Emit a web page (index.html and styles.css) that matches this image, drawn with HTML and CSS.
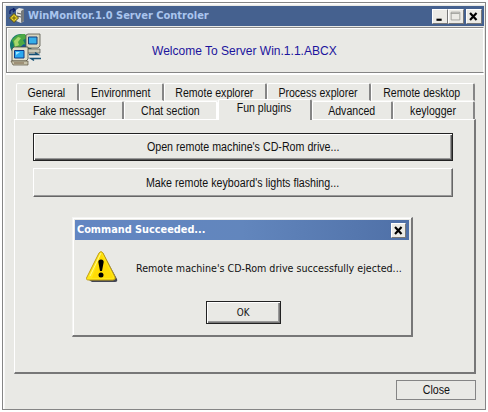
FILE: index.html
```html
<!DOCTYPE html>
<html lang="en">
<head>
<meta charset="utf-8">
<title>WinMonitor.1.0 Server Controler</title>
<link rel="stylesheet" href="styles.css">
</head>
<body>
<main class="window">
  <header class="titlebar">
    <svg class="app-icon" viewBox="0 0 16 16">
      <path d="M7 2l3-2 5 1v12l-3 2-5-2z" fill="#e2e3df"/>
      <path d="M12 3l3-2v12l-3 2z" fill="#777b7c"/>
      <path d="M8 5l4 1M8 8l4 1" stroke="#555" fill="none"/>
      <path d="M1 6V3q1-2 4-1M4 0l2 2-2 2" stroke="#0b1d66" stroke-width="1.3" fill="none"/>
      <path d="M5 5.500l4.500 4.500-4.500 4.500-4.500-4.500z" fill="#f4dc28" stroke="#4a4010"/>
      <path d="M5 7.500v5M2.500 10h5" stroke="#6b5c10"/>
    </svg>
    <h1 class="title"><span>WinMonitor.1.0 Server Controler</span></h1>
    <div class="controls">
      <button class="ctl"><svg viewBox="0 0 15 15"><path d="M4 10h6v2.500H4z"/></svg></button>
      <button class="ctl"><svg viewBox="0 0 15 15"><path d="M2.500 2.500h10v9h-10zM2 4h10" fill="none" stroke="#999a96"/></svg></button>
      <button class="ctl ctl-close"><svg viewBox="0 0 15 15"><path d="M3.500 3.500l7.500 8M11 3.500l-7.500 8" stroke="#000" stroke-width="2.500"/></svg></button>
    </div>
  </header>
  <section class="banner">
    <svg class="banner-icon" viewBox="0 0 33 33">
      <circle cx="12" cy="12" r="11" fill="#14776e"/>
      <path d="M3 7Q8 0 16 1l2 4-4 2 2 4-4 3-3 5-5-2 1-5z" fill="#4da943"/>
      <path d="M5 8l4-4 3 1-3 4 1 3-4 2z" fill="#a8d76c"/>
      <path d="M10 15l5-4 3 4-3 4z" fill="#14509b"/>
      <path d="M17 2l2-1h12v12l-2 2H17z" fill="#d7d4bd" stroke="#55574d" stroke-width=".8"/>
      <path d="M19.500 4h8.500v7h-8.500z" fill="#36aee8" stroke="#173d78"/>
      <path d="M16 16h15v4H18z" fill="#c9c8b6" stroke="#55574d" stroke-width=".7"/>
      <path d="M3 16l2-2h14v12l-2 2H3z" fill="#e1dec9" stroke="#4d4d43" stroke-width=".8"/>
      <path d="M5.500 17.500h9.500v7.500H5.500z" fill="#2aa8f0" stroke="#123b83"/>
      <path d="M7 19h4l-4 3z" fill="#a3e8ff"/>
      <path d="M2 28h17v4H4z" fill="#c7c2aa" stroke="#5a513e" stroke-width=".7"/>
      <path d="M5 30h10" stroke="#765f45"/>
      <path d="M20 21.500h9l-3-2M32 25.500h-10l3 2" stroke="#155276" stroke-width="1.500" fill="none"/>
    </svg>
    <p class="welcome"><span>Welcome To Server Win.1.1.ABCX</span></p>
  </section>
  <section class="tabs">
    <nav class="row row-back">
      <a class="tab t-general"><span>General</span></a>
      <a class="tab t-env"><span>Environment</span></a>
      <a class="tab t-remote"><span>Remote explorer</span></a>
      <a class="tab t-process"><span>Process explorer</span></a>
      <a class="tab t-desktop"><span>Remote desktop</span></a>
    </nav>
    <nav class="row row-front">
      <a class="tab t-fake"><span>Fake messager</span></a>
      <a class="tab t-chat"><span>Chat section</span></a>
      <a class="tab t-fun active"><span>Fun plugins</span></a>
      <a class="tab t-adv"><span>Advanced</span></a>
      <a class="tab t-key"><span>keylogger</span></a>
    </nav>
    <div class="page">
      <button class="wide focused"><span>Open remote machine's CD-Rom drive...</span></button>
      <button class="wide second"><span>Make remote keyboard's lights flashing...</span></button>
    </div>
  </section>
  <footer class="footer"><button class="close"><span>Close</span></button></footer>
</main>
<section class="dialog" role="dialog">
  <header class="dialog-title">
    <h2><span>Command Succeeded...</span></h2>
    <button class="ctl"><svg viewBox="0 0 15 15"><path d="M3.500 3.500l7.500 8M11 3.500l-7.500 8" stroke="#000" stroke-width="2.500"/></svg></button>
  </header>
  <div class="message">
    <svg class="warning" viewBox="0 0 32 32">
      <path d="M17 2l14 26q1 3-2 3H6L3 29z" fill="#434653"/>
      <path d="M13 2q2-3 4 0l12 24q1 3-2 3H3q-4 0-2-3z" fill="#ffe817" stroke="#c29d13"/>
      <path d="M15 2l12 24q0 1-2 1H6z" fill="#ffdc05"/>
      <path d="M15 2L4 25" stroke="#fff68a"/>
      <path d="M12.300 11q0-2.500 2.700-2.500t2.700 2.500L16 20h-2z"/><circle cx="15" cy="24" r="2.500"/>
    </svg>
    <p><span>Remote machine's CD-Rom drive successfully ejected...</span></p>
  </div>
  <button class="ok"><span>OK</span></button>
</section>
</body>
</html>
```

FILE: styles.css
```css
* { box-sizing: border-box; }
body { margin: 0; padding: 2px; width: 488px; height: 412px; background: #fff; overflow: hidden; font: 12px/14px "Liberation Sans", sans-serif; color: #111; }
h1, h2, p { margin: 0; font-size: inherit; font-weight: normal; white-space: nowrap; }
button { padding: 0; border: 0; border-radius: 0; background: #e9e9e5; font: inherit; color: inherit; }
span { display: inline-block; white-space: nowrap; transform: scaleX(.89); }
svg { display: block; flex: none; }
.window { width: 484px; height: 408px; padding: 3px 1px 0 3px; background: #e9e9e5; border: 1px solid #858585; box-shadow: inset 1px 1px #fff, inset 2px 2px #f8f8f6; display: flex; flex-direction: column; }
.titlebar { height: 20px; background: #45618f; display: flex; align-items: center; padding: 0 2px 0 3px; }
.app-icon { width: 16px; height: 16px; }
.title { flex: 1; margin-left: 3px; font: bold 11px/16px "DejaVu Sans Condensed", "DejaVu Sans", sans-serif; color: #a9c5ee; }
.title span { transform-origin: left; transform: none; }
.controls { display: flex; }
.ctl { width: 15px; height: 15px; border: 1px solid; border-color: #fff #777 #777 #fff; background: #ecebe6; flex: none; }
.controls .ctl { width: 16px; }
.ctl svg { width: 13px; height: 13px; }
.ctl-close { margin-left: 2px; }
.banner { height: 46px; margin-top: 1px; border: 1px solid #858585; border-right-color: #fff; box-shadow: 0 1px #fff, 0 2px #fff, inset 1px 1px #fff; display: grid; grid-template-columns: 143px 1fr; align-items: center; }
.banner-icon { width: 33px; height: 33px; margin: -2px 0 0 2px; }
.welcome { font-size: 13px; line-height: 16px; padding-top: 1px; margin-left: 2px; color: #1c149d; }
.welcome span { transform-origin: left; transform: scaleX(.925); }
.tabs { margin: 10px 8px 0; display: flex; flex-direction: column; }
.row { display: flex; height: 18px; padding: 0 2px; }
.tab { height: 18px; border-top: 1px solid #fff; border-left: 1px solid #fff; border-right: 2px solid #858585; border-radius: 2px 2px 0 0; text-align: center; padding: 2px 1px 0 0; flex: none; }
.tab span { transform: scaleX(.88); }
.row-back .tab { border-bottom: 1px solid #f4f4f1; }
.t-general { width: 63px; }
.t-env { width: 85px; }
.t-remote { width: 103px; }
.t-process { width: 104px; }
.t-desktop { width: 104px; }
.t-fake { width: 108px; }
.t-chat { width: 94px; border-right-color: #fff; }
.t-fun { width: 94px; }
.t-adv { width: 81px; }
.t-key { width: 82px; }
.active { height: 21px; margin-top: -2px; background: #e9e9e5; padding-top: 1px; z-index: 1; }
.page { height: 255px; border: solid; border-width: 1px 2px 2px 1px; border-color: #fff #777 #777 #fff; padding: 13px 22px 0 18px; }
.wide { display: block; width: 420px; height: 29px; border: 1px solid; border-color: #fff #666 #666 #fff; box-shadow: inset -1px -1px #999; text-align: center; }
.focused { height: 28px; border-color: #222; box-shadow: inset 1px 1px #fff, inset -1px -1px #555, inset -2px -2px #999; }
.second { margin-top: 7px; }
.footer { margin: 6px 8px 0; display: flex; justify-content: flex-end; }
.close { width: 80px; height: 20px; border: 1px solid #858585; }
.dialog { position: absolute; left: 72px; top: 217px; width: 341px; height: 120px; padding: 2px 2px 0 2px; background: #e9e9e5; border: solid; border-width: 1px 2px 2px 1px; border-color: #f4f4f2 #777 #777 #f4f4f2; box-shadow: inset 1px 1px #fff; }
.dialog-title { height: 20px; padding: 0 3px 0 2px; background: linear-gradient(90deg, #6386c2, #6286bd 50%, #4f70a7); display: flex; align-items: center; justify-content: space-between; color: #fff; }
.dialog-title h2 { font: bold 11px/16px "DejaVu Sans Condensed", "DejaVu Sans", sans-serif; }
.dialog-title span { transform-origin: left; transform: scaleX(.985); }
.message { display: flex; padding: 11px 0 0 11px; height: 61px; }
.warning { width: 32px; height: 32px; }
.message p { margin: 10px 0 0 18px; font: 11px/16px "DejaVu Sans Condensed", "DejaVu Sans", sans-serif; }
.message span { transform-origin: left; transform: scaleX(.965); }
.ok { display: block; width: 75px; height: 23px; margin-left: 131px; border: 1px solid #222; box-shadow: inset 1px 1px #fff, inset -1px -1px #777, inset -2px -2px #999; font: 11px/16px "DejaVu Sans Condensed", sans-serif; }
```
